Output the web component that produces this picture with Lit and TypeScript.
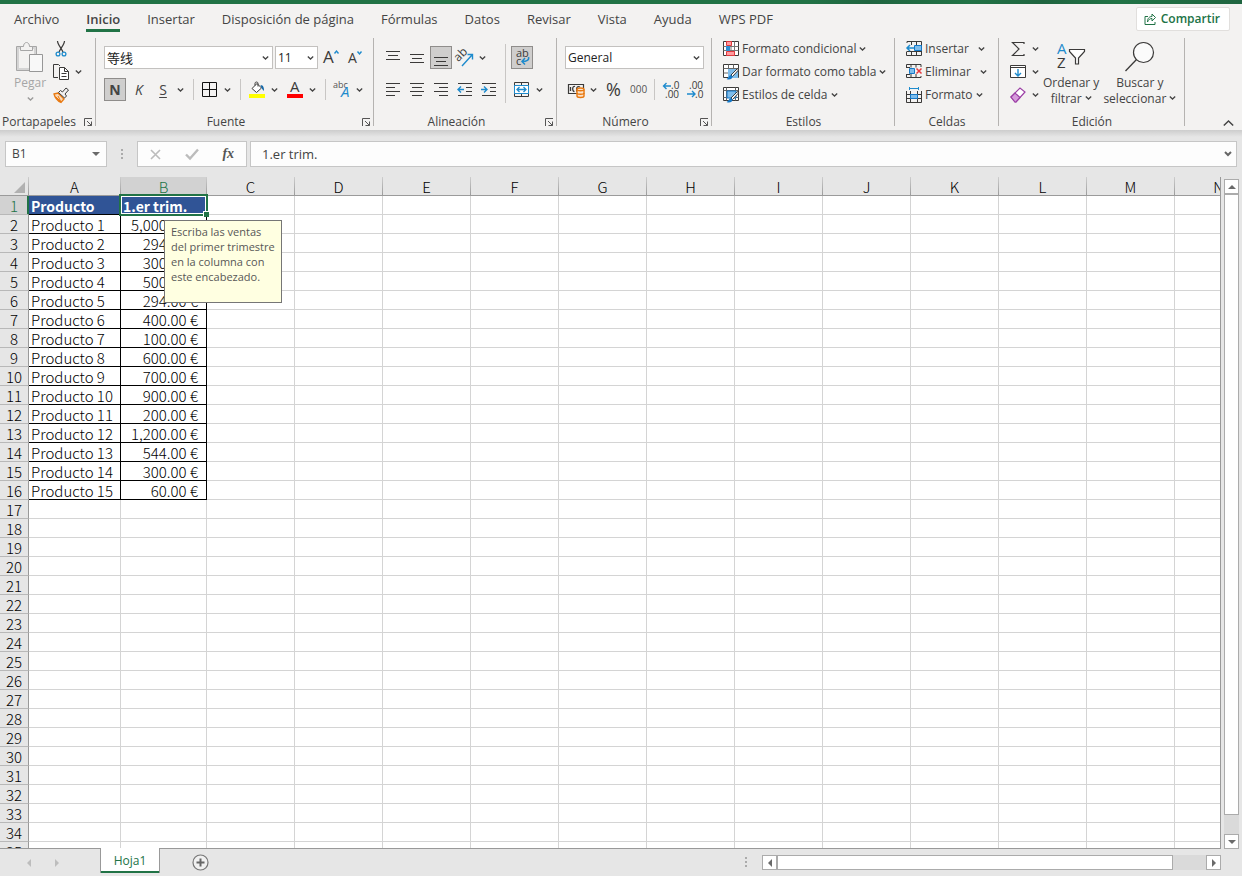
import { LitElement, html, svg, css } from "lit";
import { customElement } from "lit/decorators.js";
import { classMap } from "lit/directives/class-map.js";

const D = "#3b3a39";
const B = "#1e8bcd";

const art: Record<string, [number, number, unknown]> = {
  paste: [28, 31, svg`<path d="M.5 4.5h20v24H.5z" fill="#d4d4d4" stroke="#a6a6a6"/><path d="M3 7h15v19H3z" fill="#f3f2f1"/><path d="M4.500 8.500v-4h3c0-2 1-4 3-4s3 2 3 4h3v4z" fill="#f3f2f1" stroke="#a6a6a6"/><path d="M13.500 12.500h13v17h-13z" fill="#f8f8f8" stroke="#979797"/>`],
  cut: [16, 16, svg`<path d="M4.500 0c0 3 3 6 5.500 11M11.500 0c0 3-3 6-5.500 11" fill="none" stroke="${D}" stroke-width="1.200"/><circle cx="5" cy="13" r="1.900" fill="none" stroke="${B}" stroke-width="1.300"/><circle cx="11" cy="13" r="1.900" fill="none" stroke="${B}" stroke-width="1.300"/>`],
  copy: [16, 16, svg`<path d="M5 13.500H.5V.5h5l1.500 1.500" fill="none" stroke="${D}"/><path d="M6.500 3.500h5l4 4v8h-9z" fill="#fff" stroke="${D}"/><path d="M11.500 3.500v4h4M8.500 9.500h5M8.500 12.500h5" fill="none" stroke="${D}"/>`],
  brush: [16, 16, svg`<path d="M1 7l4-1 6 6-3 3.500C5 14 2 11 1 7z" fill="#fbd9b5" stroke="#e8780f" stroke-width="1.300"/><path d="M3 10l5 5M5 9l3 6" stroke="#e8780f" fill="none"/><path d="M5.500 5.500l2-2 2 1.500 3.500-4 2.500 2-3.500 4 1.500 2-2 2z" fill="#f3f2f1" stroke="${D}"/>`],
  grow: [16, 18, svg`<text x="0" y="14" font-size="17" fill="${D}">A</text><path d="M11.500 4.500l2-2.500 2 2.500" fill="none" stroke="${B}" stroke-width="1.400"/>`],
  shrink: [16, 18, svg`<text x="1" y="14" font-size="14" fill="${D}">A</text><path d="M10.500 2.500l2 2.500 2-2.500" fill="none" stroke="${B}" stroke-width="1.400"/>`],
  borders: [16, 16, svg`<path d="M.5.5h14v14H.5zM7.500.5v14M.5 7.500h14" fill="none" stroke="#111"/>`],
  fill: [16, 18, svg`<path d="M3 7.500l5-5 4.500 4.500-5 4.500z" fill="#fff" stroke="${D}"/><path d="M6 4.500V2.500c0-2 3-2 3 0v3" fill="none" stroke="${D}"/><path d="M11.500 4c3 0 3.500 3 3.500 6-1-1-2-2-2.500-3z" fill="#1468a8"/><path d="M0 13h16v4H0z" fill="#ff0"/>`],
  color: [16, 18, svg`<text x="3" y="11" font-size="15" fill="${D}">A</text><path d="M0 13h16v4H0z" fill="#f00"/>`],
  effects: [18, 18, svg`<text x="0" y="7" font-size="9" fill="#555">abc</text><text x="8" y="16" font-size="15" font-style="italic" fill="${B}">A</text>`],
  top: [16, 16, svg`<path d="M1 1.500h14M3 5.500h10M1 9.500h14" stroke="${D}"/>`],
  mid: [16, 16, svg`<path d="M1 4.500h14M3 8.500h10M1 12.500h14" stroke="${D}"/>`],
  bot: [16, 16, svg`<path d="M1 7.500h14M3 11.500h10M1 15.500h14" stroke="${D}"/>`],
  left: [16, 16, svg`<path d="M1 1.500h14M1 5.500h9M1 9.500h14M1 13.500h9" stroke="${D}"/>`],
  center: [16, 16, svg`<path d="M1 1.500h14M3 5.500h10M1 9.500h14M3 13.500h10" stroke="${D}"/>`],
  right: [16, 16, svg`<path d="M1 1.500h14M6 5.500h9M1 9.500h14M6 13.500h9" stroke="${D}"/>`],
  outdent: [16, 16, svg`<path d="M1 1.500h14M9 5.500h6M9 9.500h6M1 13.500h14" stroke="${D}"/><path d="M7 7.500H1M4 4.500l-3 3 3 3" fill="none" stroke="${B}" stroke-width="1.400"/>`],
  indent: [16, 16, svg`<path d="M1 1.500h14M9 5.500h6M9 9.500h6M1 13.500h14" stroke="${D}"/><path d="M0 7.500h6M3 4.500l3 3-3 3" fill="none" stroke="${B}" stroke-width="1.400"/>`],
  orient: [18, 18, svg`<text x="0" y="10" font-size="12" fill="${D}" transform="rotate(-45 5 9)">ab</text><path d="M6 17L16 6M11.500 5.500H16.500V10.500" fill="none" stroke="${B}" stroke-width="1.400"/>`],
  wrap: [16, 18, svg`<text x="2" y="8" font-size="11" fill="${D}">ab</text><text x="2" y="16" font-size="11" fill="${D}">c</text><path d="M14.500 8c1 3-2 4.500-6 4.500M11 9l-3 3.500 3 3" fill="none" stroke="${B}" stroke-width="1.500"/>`],
  merge: [16, 16, svg`<path d="M.5 4V.5h14V4M7.500 1v3M.5 11v3.500h14V11M7.500 11v3.500" fill="none" stroke="${D}"/><path d="M.5 3.500h14v8H.5z" fill="#fff" stroke="${B}"/><path d="M3 7.500h9M5.500 5L3 7.500 5.500 10M9.500 5l2.500 2.500-2.500 2.500" fill="none" stroke="${B}" stroke-width="1.300"/>`],
  money: [17, 16, svg`<path d="M.5 2.500h15v9H.5z" fill="#f3f2f1" stroke="${D}" stroke-width="1.200"/><path d="M7 4.500c-3-1-3 5-.5 5M12 5c-4-2-4 4-2.500 5M2.500 5v4" fill="none" stroke="${D}" stroke-width="1.300"/><path d="M9 7.500c0-2 7-2 7 0V14c0 2-7 2-7 0z" fill="#fbe3cb" stroke="#e8780f" stroke-width="1.400"/><path d="M9 7.500c0 1.700 7 1.700 7 0M9 11c0 1.700 7 1.700 7 0" fill="none" stroke="#e8780f" stroke-width="1.400"/>`],
  percent: [18, 18, svg`<text x="1" y="15" font-size="18" fill="${D}">%</text>`],
  zeros: [18, 16, svg`<text x="1" y="11" font-size="10" fill="#555">000</text>`],
  decup: [18, 18, svg`<text x="9" y="8" font-size="10" fill="${D}">.0</text><text x="3" y="17" font-size="10" fill="${D}">.00</text><path d="M9 5H1.500M4.500 2l-3 3 3 3" fill="none" stroke="${B}" stroke-width="1.400"/>`],
  decdown: [18, 18, svg`<text x="3" y="8" font-size="10" fill="${D}">.00</text><text x="9" y="17" font-size="10" fill="${D}">.0</text><path d="M1 13h8M6 10l3 3-3 3" fill="none" stroke="${B}" stroke-width="1.400"/>`],
  cond: [16, 16, svg`<path d="M.5.5h15v14H.5z" fill="#fff" stroke="${D}"/><path d="M11.500.5v14M.5 5.500h15M.5 9.500h15M8 .5v14" stroke="#777"/><path d="M3.500.5h5v4h-5zM3.500 10.500h8v4h-8z" fill="#ff9a9e" stroke="#e03a3e"/><path d="M3 5h4v5H3z" fill="#2d8fd5"/>`],
  table: [16, 16, svg`<path d="M.5.5h15v13H.5z" fill="#fff" stroke="${D}"/><path d="M.5 4.500h15M5.500.5v13M10.500.5v13M.5 9h15" stroke="#666"/><path d="M5 5h10v9H5z" fill="#7fbdeb"/><path d="M14.500 4.500L8 11l1.500 1.500 6-6.500z" fill="#fff" stroke="${D}"/><path d="M8 11c-2 0-2 3-4.500 4 3 1.500 6 0 6-2.500z" fill="#1479c9"/>`],
  styles: [16, 16, svg`<path d="M.5.5h15v13H.5z" fill="#fff" stroke="${D}"/><path d="M.5 3.500h15M3.500.5v13M12.500.5v13M.5 10.500h15" stroke="#666"/><path d="M4 4h9v7H4z" fill="#7fbdeb" stroke="#1479c9"/><path d="M14.500 4.500L8 11l1.500 1.500 6-6.500z" fill="#fff" stroke="${D}"/><path d="M8 11c-2 0-2 3-4.500 4 3 1.500 6 0 6-2.500z" fill="#1479c9"/>`],
  cins: [16, 16, svg`<path d="M1 2V.5h14.500v14H.5V11M5.500.5V4M10.500.5v14M5.500 11v3.500M9 4.500h6.500M.5 10.500h15" fill="none" stroke="${D}"/><path d="M8.500 4.500h7v5h-7z" fill="#7fbdeb" stroke="#1479c9"/><path d="M8 7H1M4 4L1 7l3 3" fill="none" stroke="${B}" stroke-width="1.500"/>`],
  cdel: [16, 16, svg`<path d="M.5 4V.5h14.500V3M.5 11v2.500h14.500V12M5 .5v3M10 .5v3M5 10v3.500M10 10v3.500M0 3.500h4M0 10.500h4" fill="none" stroke="${D}"/><path d="M3.500 4.500h5v5h-5z" fill="#7fbdeb" stroke="#1479c9"/><path d="M10.500 4.500l5 5M15.500 4.500l-5 5" stroke="#e8393d" stroke-width="1.500"/>`],
  cfmt: [16, 16, svg`<path d="M3 1.500h10M3.500 0v3M12.500 0v3" stroke="${B}"/><path d="M.5 4v11.500h15V4M.5 7.500h15M.5 11.500h15M4.500 4v11.500M11.500 4v11.500" fill="none" stroke="${D}"/><path d="M4.500 7.500h7v4h-7z" fill="#7fbdeb" stroke="#1479c9"/>`],
  sum: [16, 16, svg`<path d="M14 3V1.500H2.500L9 8l-6.500 6.500H14V13" fill="none" stroke="${D}" stroke-width="1.200"/>`],
  filldown: [16, 16, svg`<path d="M.5 1.500h15v12H.5z" fill="#fff" stroke="${D}"/><path d="M.5 3.500h15" stroke="${D}"/><path d="M8 5v7M5 9l3 3 3-3" fill="none" stroke="${B}" stroke-width="1.400"/>`],
  eraser: [16, 16, svg`<path d="M1 10l9-9 5 4-9 10H5z" fill="#fff" stroke="#9b3fa5" stroke-width="1.200"/><path d="M1 10l4-4 5 4.500L6 15H5z" fill="#d69bdc" stroke="#9b3fa5" stroke-width="1.200"/>`],
  sort: [30, 31, svg`<text x="1" y="12" font-size="15" fill="${B}">A</text><text x="1" y="26" font-size="15" fill="${D}">Z</text><path d="M13.500 7.500h15v2l-6 6.500v6h-3v-6l-6-6.500z" fill="#fff" stroke="${D}" stroke-width="1.200"/>`],
  find: [30, 31, svg`<circle cx="18.500" cy="10.500" r="10" fill="#fbfbfb" stroke="${D}" stroke-width="1.200"/><path d="M11.500 17.500L.5 29" stroke="${D}" stroke-width="1.300"/>`],
  share: [12, 14, svg`<path d="M4 4.500H1v8h10V10" fill="none" stroke="#217346"/><path d="M3.500 10c0-4 2-5.500 4.500-5.500V2l3.500 3.500L8 9V6.500c-2 0-3.500 1-4.500 3.500z" fill="none" stroke="#217346"/>`],
  caret: [7, 4, svg`<path d="M.8.500l2.700 2.500L6.200.5" fill="none" stroke="#444" stroke-width="1.300"/>`],
  launch: [9, 9, svg`<path d="M.5 8V.5H8M3 3l4.500 4.500M7.500 3.500v4h-4" fill="none" stroke="#555"/>`],
  up: [11, 6, svg`<path d="M.8 5.500l4.700-4.500 4.700 4.500" fill="none" stroke="#444" stroke-width="1.500"/>`],
  cancel: [11, 11, svg`<path d="M1 1l9 9M10 1l-9 9" stroke="#bcbcbc" stroke-width="1.600"/>`],
  check: [14, 12, svg`<path d="M1 6.500l4 4 8-9" fill="none" stroke="#bcbcbc" stroke-width="2.400"/>`],
  down2: [8, 6, svg`<path d="M1 1l3 3 3-3" fill="none" stroke="#666" stroke-width="2"/>`],
  tri: [8, 4, svg`<path d="M0 0h8l-4 4z" fill="#6a6a6a"/>`],
  aup: [8, 4, svg`<path d="M0 4h8L4 0z" fill="#6a6a6a"/>`],
  aleft: [4, 8, svg`<path d="M4 0v8L0 4z" fill="#6a6a6a"/>`],
  aright: [4, 8, svg`<path d="M0 0v8l4-4z" fill="#6a6a6a"/>`],
  nleft: [4, 8, svg`<path d="M4 0v8L0 4z" fill="#bdbdbd"/>`],
  nright: [4, 8, svg`<path d="M0 0v8l4-4z" fill="#bdbdbd"/>`],
  plus: [17, 17, svg`<circle cx="8.500" cy="8.500" r="7.500" fill="#f0f0f0" stroke="#777" stroke-width="1.200"/><path d="M8.500 4.500v8M4.500 8.500h8" stroke="#666" stroke-width="2"/>`],
  corner: [11, 11, svg`<path d="M11 0v11H0z" fill="#b1b1b1"/>`],
  dots: [2, 11, svg`<path d="M0 0h2v2H0zM0 4h2v2H0zM0 8h2v2H0z" fill="#ababab"/>`],
};

const icon = (n: string) => {
  const [w, h, body] = art[n];
  return html`<svg class="ico" width=${w} height=${h} viewBox="0 0 ${w} ${h}" aria-hidden="true">${body}</svg>`;
};

const tabs = ["Archivo", "Inicio", "Insertar", "Disposición de página", "Fórmulas", "Datos", "Revisar", "Vista", "Ayuda", "WPS PDF"];

const sales = ["5,000.00", "294.00", "300.00", "500.00", "294.00", "400.00", "100.00", "600.00", "700.00", "900.00", "200.00", "1,200.00", "544.00", "300.00", "60.00"];

const columns = "ABCDEFGHIJKLMNOPQRSTUVWXYZ".split("");
const rows = Array.from({ length: 60 }, (_, i) => i + 1);

@customElement("app-root")
export class AppRoot extends LitElement {
  static styles = css`
    :host {
      display: flex;
      flex-direction: column;
      height: 100vh;
      overflow: hidden;
      background: #e6e6e6;
      color: #444;
      font: 12px/16px "Open Sans", "Noto Sans", sans-serif;
    }
    * { box-sizing: border-box; }
    button, input, select {
      font: inherit;
      color: inherit;
      margin: 0;
      padding: 0;
      border: 0;
      border-radius: 0;
      background: none;
    }
    .ico { display: block; flex: none; overflow: visible; }
    .title { height: 4px; flex: none; background: linear-gradient(90deg, #217346 65%, #1f6540 70%, #217346 78%, #1f6540 84%, #217346 90%, #1f6540); }
    .tabs {
      flex: none;
      display: flex;
      align-items: flex-start;
      gap: 27px;
      height: 33px;
      padding: 4px 12px 0 14px;
      background: #f3f2f1;
      font-size: 13px;
    }
    .tab { height: 24px; padding: 0 0 3px; white-space: nowrap; }
    .tab.active { font-weight: 600; border-bottom: 3px solid #217346; padding: 0; }
    .share {
      display: flex;
      align-items: center;
      gap: 5px;
      height: 24px;
      margin: -1px 0 0 auto;
      padding: 0 9px 0 7px;
      background: #fff;
      border: 1px solid #e1dfdd;
      border-radius: 2px;
      color: #217346;
      font-size: 12px;
      font-weight: 600;
    }
    .ribbon { flex: none; display: flex; height: 93px; background: #f3f2f1; }
    .group {
      flex: none;
      display: flex;
      flex-direction: column;
      justify-content: space-between;
      background: linear-gradient(#b5b3b1, #b5b3b1) no-repeat right 1px / 1px 88px;
    }
    .g1 { width: 96px; }
    .g2 { width: 278px; }
    .g3 { width: 183px; }
    .g4 { width: 155px; }
    .g5 { width: 183px; }
    .g6 { width: 104px; }
    .g7 { width: 186px; }
    .caption { display: flex; align-items: center; height: 16px; }
    .caption span { flex: 1; text-align: center; }
    .launcher { width: 18px; display: flex; padding-left: 6px; }
    .blocks { display: flex; padding-left: 7px; }
    .lines { display: flex; flex-direction: column; gap: 9px; padding-top: 9px; }
    .line { display: flex; height: 23px; align-items: center; }
    .ib { width: 24px; height: 23px; display: flex; align-items: center; justify-content: center; font-size: 14px; }
    .ib.on { width: 22px; margin: 0 1px; background: #cfcecd; border: 1px solid #8f8d8b; }
    .bold { font-weight: 700; }
    .italic { font-style: italic; }
    .under { text-decoration: underline; text-underline-offset: 2px; }
    .split { display: flex; align-items: center; width: 38px; }
    .arrow { width: 10px; height: 23px; display: flex; align-items: center; justify-content: center; }
    .sep { width: 1px; height: 21px; margin: 0 4px; background: #c8c6c4; }
    .sep.tall { height: 59px; margin-top: 7px; }
    .combo { display: grid; align-items: center; height: 23px; margin: 0 1px; border: 1px solid #c3c1bf; background: #fff; }
    .combo select, .combo .ico { grid-area: 1 / 1; }
    .combo select { appearance: none; height: 21px; padding-left: 2px; color: #222; }
    .combo .ico { justify-self: end; margin-right: 3px; pointer-events: none; }
    .face { width: 169px; }
    .face select { font-family: "Noto Sans CJK SC", sans-serif; font-size: 13px; }
    .size { width: 43px; }
    .format { width: 139px; }
    .stack { display: flex; flex-direction: column; }
    .cmd { display: flex; align-items: center; height: 23px; gap: 3px; white-space: nowrap; }
    .cmd .gap { width: 3px; }
    .list { padding-left: 11px; }
    .tools .cmd { gap: 6px; }
    .large { display: flex; flex-direction: column; align-items: center; padding-top: 5px; line-height: 16px; }
    .large .ico { margin-bottom: 2px; }
    .large .last { display: flex; align-items: center; gap: 3px; }
    .edit { display: flex; gap: 4px; padding-left: 11px; }
    .clip { display: flex; gap: 7px; padding-left: 14px; }
    .paste { color: #a6a6a6; }
    .paste .caret { opacity: 0.5; padding-top: 6px; }
    .icons .cmd { gap: 6px; }
    .collapse { margin: auto 8px 4px auto; }
    .formula {
      flex: none;
      display: flex;
      align-items: stretch;
      gap: 3px;
      height: 47px;
      padding: 11px 5px 10px;
      background: linear-gradient(#cdcdcd, #e6e6e6 7px);
    }
    .box { display: flex; align-items: center; border: 1px solid #c6c6c6; background: #fdfdfd; }
    .name { width: 102px; padding: 0 6px; }
    .name input { flex: 1; min-width: 0; }
    .grip { width: 24px; display: flex; align-items: center; justify-content: center; }
    .fx { width: 110px; justify-content: space-around; }
    .fx i { font: italic bold 14px/16px "Liberation Serif", serif; color: #555; }
    .value { flex: 1; padding: 0 4px 0 11px; font-size: 13px; }
    .value input { flex: 1; min-width: 0; }
    .work { flex: 1; min-height: 0; display: flex; }
    .view { flex: 1; min-width: 0; overflow: hidden; border-right: 1px solid #999; border-bottom: 1px solid #999; }
    .sheet {
      table-layout: fixed;
      border-collapse: separate;
      border-spacing: 0;
      width: 0;
      font: 300 15px/16px "Noto Sans CJK SC", sans-serif;
      color: #000;
    }
    .sheet th, .sheet td { height: 19px; padding: 2px 0 0; white-space: nowrap; }
    .sheet th { font-weight: 300; background: #e6e6e6; color: #000; }
    .rowcol { width: 29px; }
    .cola { width: 92px; }
    .colb { width: 86px; }
    .col { width: 88px; }
    .sheet thead th { border-right: 1px solid; border-bottom: 1px solid #999; border-image: linear-gradient(#d0d0d0, #999) 1; }
    .sheet thead th.sel, .sheet tbody th.sel { background: #d2d2d2; color: #217346; }
    .sheet tbody th { border-right: 1px solid #999; border-bottom: 1px solid #b8b8b8; }
    .sheet tbody th.sel { border-right-color: #217346; box-shadow: inset -1px 0 #217346; }
    .sheet .cornercell .ico { margin: 1px 3px 0 auto; }
    .sheet td { border-right: 1px solid #d4d4d4; border-bottom: 1px solid #d4d4d4; background: #fff; }
    .sheet td.filled { border-color: #000; padding-left: 2px; }
    .sheet td.num { padding: 2px 8px 0 0; text-align: right; }
    .sheet td.head { background: #305496; color: #fff; font-size: 14px; font-weight: 700; }
    .active-cell { position: relative; }
    .ring { position: absolute; inset: -2px; border: 2px solid #217346; box-shadow: inset 0 0 0 1px #fff; pointer-events: none; }
    .handle { position: absolute; right: -3px; bottom: -3px; width: 6px; height: 6px; background: #217346; border: solid #fff; border-width: 1px 0 0 1px; }
    .tip {
      position: absolute;
      z-index: 1;
      left: 43px;
      top: 24px;
      width: 118px;
      height: 83px;
      padding: 3px 2px 3px 6px;
      background: #ffffe1;
      border: 1px solid #767676;
      color: #575757;
      font: 11px/15px "Open Sans", "Noto Sans", sans-serif;
      white-space: normal;
    }
    .vbar { width: 15px; margin: 2px 3px 0; display: flex; flex-direction: column; background: #dadada; }
    .hbar { width: 459px; height: 15px; display: flex; background: #dadada; }
    .step, .thumb { background: #fff; border: 1px solid #ababab; }
    .step { flex: none; width: 15px; height: 15px; display: flex; align-items: center; justify-content: center; }
    .vbar .thumb { flex: 621; }
    .vbar .rest { flex: 19; }
    .hbar .thumb { flex: 396; }
    .hbar .rest { flex: 33; }
    .footer { flex: none; display: flex; align-items: center; height: 27px; padding-right: 21px; }
    .nav { width: 28px; display: flex; justify-content: center; }
    .navs { display: flex; width: 100px; padding-left: 15px; }
    .sheettab {
      align-self: flex-start;
      width: 60px;
      height: 25px;
      margin-top: -1px;
      background: #fff;
      border: solid #999;
      border-width: 0 1px;
      box-shadow: inset 0 -2px #217346;
      color: #217346;
    }
    .add { margin: 0 auto 0 32px; }
    .footer .grip { width: 32px; }
  `;

  private ib(name: string, label: string, on = false) {
    return html`<button class=${classMap({ ib: true, on })} aria-label=${label} aria-pressed=${on}>${icon(name)}</button>`;
  }

  private arrow(label: string) {
    return html`<button class="arrow" aria-label=${label}>${icon("caret")}</button>`;
  }

  private split(name: string, label: string) {
    return html`<div class="split">${this.ib(name, label)}${this.arrow("Más: " + label)}</div>`;
  }

  private cmd(name: string, label: string, wide = false) {
    return html`<button class="cmd">${icon(name)}<span>${label}</span>${wide ? html`<span class="gap"></span>` : ""}${icon("caret")}</button>`;
  }

  private tool(name: string, label: string, drop = true) {
    return html`<button class="cmd" aria-label=${label}>${icon(name)}${drop ? icon("caret") : ""}</button>`;
  }

  private caption(text: string, launcher = false) {
    return html`<div class="caption"><span>${text}</span>${launcher ? html`<button class="launcher" aria-label="Configuración de ${text}">${icon("launch")}</button>` : ""}</div>`;
  }

  private ribbon() {
    return html`<div class="ribbon">
      <section class="group g1">
        <div class="clip">
          <button class="large paste">${icon("paste")}<span>Pegar</span><span class="caret">${icon("caret")}</span></button>
          <div class="stack icons">${this.tool("cut", "Cortar", false)}${this.tool("copy", "Copiar")}${this.tool("brush", "Copiar formato", false)}</div>
        </div>
        ${this.caption("Portapapeles", true)}
      </section>
      <section class="group g2">
        <div class="blocks"><div class="lines">
          <div class="line">
            <div class="combo face"><select aria-label="Fuente"><option>等线</option></select>${icon("caret")}</div>
            <div class="combo size"><select aria-label="Tamaño de fuente"><option>11</option></select>${icon("caret")}</div>
            ${this.ib("grow", "Aumentar tamaño")}${this.ib("shrink", "Disminuir tamaño")}
          </div>
          <div class="line">
            <button class="ib on bold">N</button>
            <button class="ib italic">K</button>
            <div class="split"><button class="ib under">S</button>${this.arrow("Más subrayados")}</div>
            <span class="sep"></span>
            ${this.split("borders", "Bordes")}
            <span class="sep"></span>
            ${this.split("fill", "Color de relleno")}${this.split("color", "Color de fuente")}
            <span class="sep"></span>
            ${this.split("effects", "Efectos")}
          </div>
        </div></div>
        ${this.caption("Fuente", true)}
      </section>
      <section class="group g3">
        <div class="blocks">
          <div class="lines">
            <div class="line">${this.ib("top", "Alinear arriba")}${this.ib("mid", "Alinear en medio")}${this.ib("bot", "Alinear abajo", true)}${this.split("orient", "Orientación")}</div>
            <div class="line">${this.ib("left", "Izquierda")}${this.ib("center", "Centrar")}${this.ib("right", "Derecha")}${this.ib("outdent", "Disminuir sangría")}${this.ib("indent", "Aumentar sangría")}</div>
          </div>
          <span class="sep tall"></span>
          <div class="lines">
            <div class="line">${this.ib("wrap", "Ajustar texto", true)}</div>
            <div class="line">${this.split("merge", "Combinar")}</div>
          </div>
        </div>
        ${this.caption("Alineación", true)}
      </section>
      <section class="group g4">
        <div class="blocks"><div class="lines">
          <div class="line"><div class="combo format"><select aria-label="Formato de número"><option>General</option></select>${icon("caret")}</div></div>
          <div class="line">${this.split("money", "Moneda")}${this.ib("percent", "Porcentaje")}${this.ib("zeros", "Millares")}<span class="sep"></span>${this.ib("decup", "Aumentar decimales")}${this.ib("decdown", "Disminuir decimales")}</div>
        </div></div>
        ${this.caption("Número", true)}
      </section>
      <section class="group g5">
        <div class="stack list">${this.cmd("cond", "Formato condicional")}${this.cmd("table", "Dar formato como tabla")}${this.cmd("styles", "Estilos de celda")}</div>
        ${this.caption("Estilos")}
      </section>
      <section class="group g6">
        <div class="stack list">${this.cmd("cins", "Insertar", true)}${this.cmd("cdel", "Eliminar", true)}${this.cmd("cfmt", "Formato")}</div>
        ${this.caption("Celdas")}
      </section>
      <section class="group g7">
        <div class="edit">
          <div class="stack tools">${this.tool("sum", "Autosuma")}${this.tool("filldown", "Rellenar")}${this.tool("eraser", "Borrar")}</div>
          <button class="large">${icon("sort")}<span>Ordenar y</span><span class="last">filtrar ${icon("caret")}</span></button>
          <button class="large">${icon("find")}<span>Buscar y</span><span class="last">seleccionar ${icon("caret")}</span></button>
        </div>
        ${this.caption("Edición")}
      </section>
      <button class="collapse" aria-label="Contraer la cinta">${icon("up")}</button>
    </div>`;
  }

  private cell(r: number, c: number) {
    if (c > 1 || r > 16) return html`<td></td>`;
    if (r === 1) {
      return c === 0
        ? html`<td class="filled head">Producto</td>`
        : html`<td class="filled head active-cell">1.er trim.<span class="ring"></span><span class="handle"></span><div class="tip" role="tooltip">Escriba las ventas del primer trimestre en la columna con este encabezado.</div></td>`;
    }
    return c === 0 ? html`<td class="filled">Producto ${r - 1}</td>` : html`<td class="filled num">${sales[r - 2]} €</td>`;
  }

  private sheet() {
    return html`<table class="sheet">
      <colgroup><col class="rowcol" /><col class="cola" /><col class="colb" />${columns.slice(2).map(() => html`<col class="col" />`)}</colgroup>
      <thead><tr><th class="cornercell">${icon("corner")}</th>${columns.map((c) => html`<th class=${classMap({ sel: c === "B" })}>${c}</th>`)}</tr></thead>
      <tbody>${rows.map((r) => html`<tr><th class=${classMap({ sel: r === 1 })}>${r}</th>${columns.map((_, c) => this.cell(r, c))}</tr>`)}</tbody>
    </table>`;
  }

  render() {
    return html`
      <div class="title"></div>
      <nav class="tabs">
        ${tabs.map((t) => html`<button class=${classMap({ tab: true, active: t === "Inicio" })}>${t}</button>`)}
        <button class="share">${icon("share")}Compartir</button>
      </nav>
      ${this.ribbon()}
      <div class="formula">
        <div class="box name"><input aria-label="Cuadro de nombres" value="B1" />${icon("tri")}</div>
        <span class="grip">${icon("dots")}</span>
        <div class="box fx"><button aria-label="Cancelar">${icon("cancel")}</button><button aria-label="Introducir">${icon("check")}</button><button aria-label="Insertar función"><i>fx</i></button></div>
        <div class="box value"><input aria-label="Barra de fórmulas" value="1.er trim." />${icon("down2")}</div>
      </div>
      <div class="work">
        <div class="view">${this.sheet()}</div>
        <div class="vbar">
          <button class="step" aria-label="Subir">${icon("aup")}</button><div class="thumb"></div><div class="rest"></div><button class="step" aria-label="Bajar">${icon("tri")}</button>
        </div>
      </div>
      <div class="footer">
        <div class="navs"><button class="nav" aria-label="Hoja anterior">${icon("nleft")}</button><button class="nav" aria-label="Hoja siguiente">${icon("nright")}</button></div>
        <button class="sheettab">Hoja1</button>
        <button class="add" aria-label="Hoja nueva">${icon("plus")}</button>
        <span class="grip">${icon("dots")}</span>
        <div class="hbar">
          <button class="step" aria-label="Izquierda">${icon("aleft")}</button><div class="thumb"></div><div class="rest"></div><button class="step" aria-label="Derecha">${icon("aright")}</button>
        </div>
      </div>
    `;
  }
}
